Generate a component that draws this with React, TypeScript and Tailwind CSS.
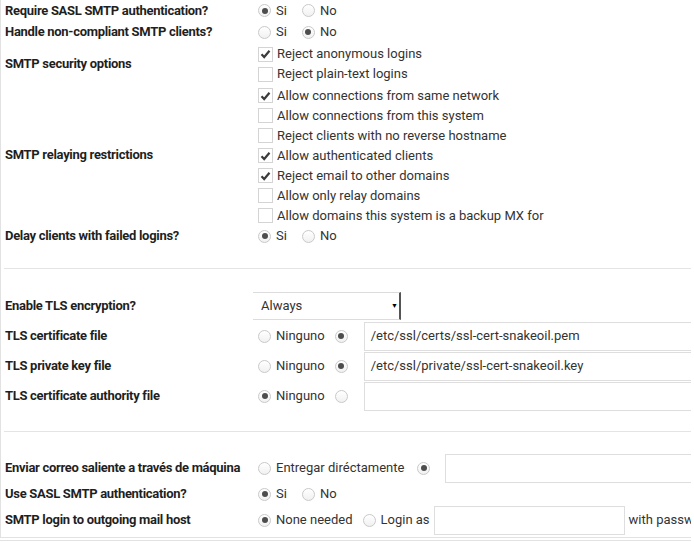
const font = { fontFamily: "Roboto, 'Liberation Sans', sans-serif" };

function Radio({ on }: { on?: boolean }) {
  return (
    <span className="inline-flex items-center justify-center w-[13px] h-[13px] rounded-full border border-[#c9c9c9] bg-gradient-to-b from-white to-[#f1f1f1] shrink-0">
      {on && <span className="w-[6px] h-[6px] rounded-full bg-[#4d4d4d]" />}
    </span>
  );
}

function Check({ on, label }: { on?: boolean; label: string }) {
  return (
    <div className="h-[20px] flex items-center">
      <span className="w-[15px] h-[15px] border border-[#d4d4d4] bg-white flex items-center justify-center shrink-0">
        {on && (
          <svg width="11" height="10" viewBox="0 0 11 10">
            <path d="M1.5 5.2 L4.2 8 L9.5 1.8" fill="none" stroke="#3c3c3c" strokeWidth="2.2" />
          </svg>
        )}
      </span>
      <span className="ml-[4px] whitespace-nowrap">{label}</span>
    </div>
  );
}

function Opt({ on, label, gap = "mr-[12px]" }: { on?: boolean; label: string; gap?: string }) {
  return (
    <span className={`inline-flex items-center shrink-0 whitespace-nowrap ${gap}`}>
      <Radio on={on} />
      <span className="ml-[5px]">{label}</span>
    </span>
  );
}

function Row({ label, h, children }: { label: string; h: string; children: React.ReactNode }) {
  return (
    <div className={`flex items-center ${h}`}>
      <div className="w-[252px] shrink-0 pl-[4px] font-bold tracking-[-0.3px] text-[#1f1f1f] whitespace-nowrap">{label}</div>
      <div className="flex-1 flex items-center pl-[5px] min-w-0 overflow-hidden">{children}</div>
    </div>
  );
}

function Field({ value = "", w = "w-[400px]" }: { value?: string; w?: string }) {
  return (
    <div className={`${w} shrink-0 h-[29px] border border-[#dedede] bg-white flex items-center px-[6px] text-[#333]`}>{value}</div>
  );
}

export default function App() {
  return (
    <div className="w-[694px] h-[542px] bg-white overflow-hidden text-[13px] text-[#333]" style={font}>
      <div className="w-[691px] border-l border-b border-[#e2e2e2] pb-[2px]">
        <Row label="Require SASL SMTP authentication?" h="h-[21px]">
          <Opt on label="Si" gap="mr-[15px]" />
          <Opt label="No" />
        </Row>
        <Row label="Handle non-compliant SMTP clients?" h="h-[22px]">
          <Opt label="Si" gap="mr-[15px]" />
          <Opt on label="No" />
        </Row>
        <Row label="SMTP security options" h="h-[42px]">
          <div className="self-start">
            <Check on label="Reject anonymous logins" />
            <Check label="Reject plain-text logins" />
          </div>
        </Row>
        <Row label="SMTP relaying restrictions" h="h-[140px]">
          <div className="pt-[1px]">
            <Check on label="Allow connections from same network" />
            <Check label="Allow connections from this system" />
            <Check label="Reject clients with no reverse hostname" />
            <Check on label="Allow authenticated clients" />
            <Check on label="Reject email to other domains" />
            <Check label="Allow only relay domains" />
            <Check label="Allow domains this system is a backup MX for" />
          </div>
        </Row>
        <Row label="Delay clients with failed logins?" h="h-[22px]">
          <Opt on label="Si" gap="mr-[15px]" />
          <Opt label="No" />
        </Row>
        <div className="h-[21px]" />
        <div className="ml-[3px] border-t border-[#e4e4e4] h-[23px]" />
        <Row label="Enable TLS encryption?" h="h-[30px]">
          <div className="-ml-[6px] w-[149px] h-[28px] border border-[#dcdcdc] border-r-[2px] border-r-[#555] bg-white flex items-center justify-between pl-[8px] pr-[1px]">
            <span>Always</span>
            <span className="text-[7px] text-black">▼</span>
          </div>
        </Row>
        <Row label="TLS certificate file" h="h-[30px]">
          <Opt label="Ninguno" gap="mr-[10px]" />
          <Radio on />
          <div className="w-[16px] shrink-0" />
          <Field value="/etc/ssl/certs/ssl-cert-snakeoil.pem" />
        </Row>
        <Row label="TLS private key file" h="h-[30px]">
          <Opt label="Ninguno" gap="mr-[10px]" />
          <Radio on />
          <div className="w-[16px] shrink-0" />
          <Field value="/etc/ssl/private/ssl-cert-snakeoil.key" />
        </Row>
        <Row label="TLS certificate authority file" h="h-[30px]">
          <Opt on label="Ninguno" gap="mr-[10px]" />
          <Radio />
          <div className="w-[16px] shrink-0" />
          <Field />
        </Row>
        <div className="h-[20px]" />
        <div className="ml-[3px] border-t border-[#e4e4e4] h-[22px]" />
        <Row label="Enviar correo saliente a través de máquina" h="h-[30px]">
          <Opt label="Entregar diréctamente" gap="mr-[13px]" />
          <Radio on />
          <div className="w-[15px] shrink-0" />
          <Field />
        </Row>
        <Row label="Use SASL SMTP authentication?" h="h-[22px]">
          <Opt on label="Si" gap="mr-[15px]" />
          <Opt label="No" />
        </Row>
        <Row label="SMTP login to outgoing mail host" h="h-[30px]">
          <Opt on label="None needed" gap="mr-[10px]" />
          <Opt label="Login as" gap="mr-[4px]" />
          <Field w="w-[191px]" />
          <span className="ml-[4px] whitespace-nowrap">with password</span>
        </Row>
      </div>
      <div className="w-[691px] mt-[2px] border-t border-[#e2e2e2]" />
    </div>
  );
}
